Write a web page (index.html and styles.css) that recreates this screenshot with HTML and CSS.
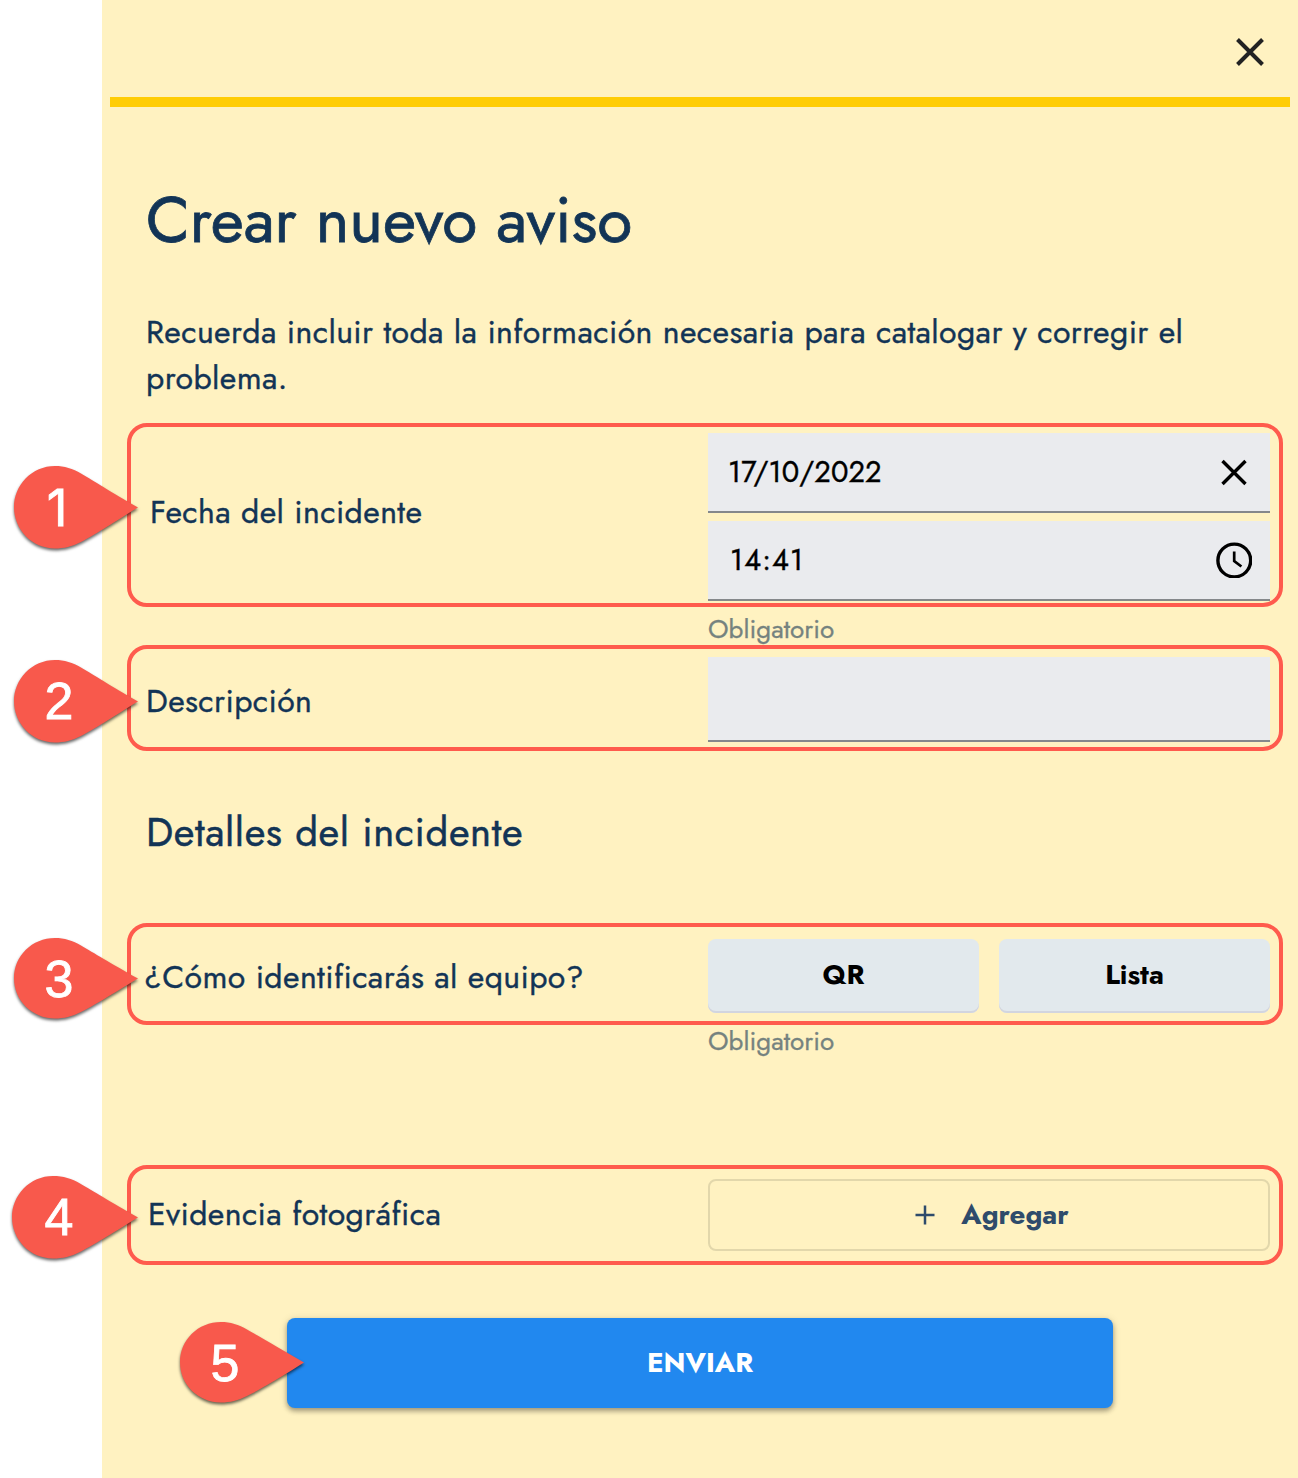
FILE: index.html
```html
<!DOCTYPE html>
<html lang="es">
<head>
<meta charset="utf-8">
<title>Crear nuevo aviso</title>
<link rel="stylesheet" href="styles.css">
</head>
<body>
<main class="panel">
  <header class="panel-header">
    <svg class="close" width="28" height="28" viewBox="0 0 28 28"><path d="M1.5 1.5l25 25M26.5 1.5l-25 25"/></svg>
  </header>
  <h1 class="title">Crear nuevo aviso</h1>
  <p class="intro">Recuerda incluir toda la información necesaria para catalogar y corregir el<br>problema.</p>

  <section class="row row-date">
    <span class="label label-date">Fecha del incidente</span>
    <div class="fields">
      <div class="field"><span>17/10/2022</span>
        <svg width="36" height="36" viewBox="0 0 36 36"><path d="M6.5 7l23 23M29.5 7l-23 23" stroke-width="3.4"/></svg>
      </div>
      <div class="field"><span class="value-time">14:41</span>
        <svg width="36" height="36" viewBox="0 0 36 36"><circle cx="18.300" cy="18.500" r="16.4" stroke-width="3.4"/><path d="M18.200 9.500v9.500l7.200 5.500" stroke-width="2.7"/></svg>
      </div>
    </div>
    <div class="marker"><svg width="132" height="96" viewBox="0 0 132 96"><path d="M126 41.500C98 25.500 82 15 69 7.500C61 2.500 52 0 43 0C20 0 2 19 2 41.300S20 82.500 43 82.500C52 82.500 60 80.500 69 76C82 69.500 98 58.500 126 41.500Z"/></svg><b class="one">1</b></div>
  </section>
  <p class="helper helper-date">Obligatorio</p>

  <section class="row row-desc">
    <span class="label label-desc">Descripción</span>
    <div class="field field-desc"></div>
    <div class="marker"><svg width="132" height="96" viewBox="0 0 132 96"><path d="M126 41.500C98 25.500 82 15 69 7.500C61 2.500 52 0 43 0C20 0 2 19 2 41.300S20 82.500 43 82.500C52 82.500 60 80.500 69 76C82 69.500 98 58.500 126 41.500Z"/></svg><b>2</b></div>
  </section>

  <h2 class="subtitle">Detalles del incidente</h2>

  <section class="row row-team">
    <span class="label label-team">¿Cómo identificarás al equipo?</span>
    <div class="choices"><button class="choice">QR</button><button class="choice">Lista</button></div>
    <div class="marker"><svg width="132" height="96" viewBox="0 0 132 96"><path d="M126 40.500C98 25 82 15 69 7.500C61 2.500 52 0 43 0C20 0 2 18 2 40.300S20 80.500 43 80.500C52 80.500 60 78.500 69 74C82 67.500 98 57.500 126 40.500Z"/></svg><b>3</b></div>
  </section>
  <p class="helper helper-team">Obligatorio</p>

  <section class="row row-photo">
    <span class="label label-photo">Evidencia fotográfica</span>
    <button class="add"><svg width="20" height="20" viewBox="0 0 20 20"><path d="M10 .5v19M.5 10h19"/></svg><span>Agregar</span></button>
    <div class="marker"><svg width="132" height="96" viewBox="0 0 132 96"><path d="M126 41.500C98 25.500 81 15 68 7.500C60 2.500 51 0 41 0C18 0 0 19 0 41.300S18 82.500 41 82.500C51 82.500 59 80.500 68 76C81 69.500 98 58.500 126 41.500Z"/></svg><b>4</b></div>
  </section>

  <div class="submit-wrap">
    <button class="submit">ENVIAR</button>
    <div class="marker marker-submit"><svg width="132" height="96" viewBox="0 0 132 96"><path d="M125 40.500C98 25 81 15 68 7.500C60 2.500 51 0 42 0C19 0 1 18 1 40.300S19 80.500 42 80.500C51 80.500 59 78.500 68 74C81 67.500 98 57.500 125 40.500Z"/></svg><b>5</b></div>
  </div>
</main>
</body>
</html>
```
FILE: styles.css
```css
* { box-sizing: border-box; }
body {
  margin: 0;
  padding-left: 102px;
  background: #fff;
  font-family: Jost, Lato, sans-serif;
  color: #123456;
}
.panel { height: 1478px; background: #fff2c1; }
h1, h2, p { margin: 0; font-weight: 400; }
button { font-family: inherit; border: 0; padding: 0; font-weight: 700; }
.panel-header {
  height: 107px;
  margin: 0 8px;
  padding: 38px 26px 0 0;
  border-bottom: 10px solid #ffcd05;
  display: flex;
  justify-content: flex-end;
}
.close { fill: none; stroke: #222; stroke-width: 4; }
.title {
  margin: 73px 0 0 44px;
  font-size: 64px;
  line-height: 80px;
  white-space: nowrap;
  -webkit-text-stroke: .8px;
}
.intro {
  margin: 49px 0 0 44px;
  font-size: 32px;
  line-height: 46px;
  height: 90px;
  white-space: nowrap;
  letter-spacing: .4px;
  -webkit-text-stroke: .35px;
}
.row {
  position: relative;
  margin: 0 15px 0 25px;
  border: 4px solid #ff5b4d;
  border-radius: 20px;
  display: grid;
  grid-template-columns: 1fr 562px;
  padding: 6px 9px 0 15px;
}
.label {
  font-size: 32px;
  line-height: 40px;
  white-space: nowrap;
  align-self: start;
  letter-spacing: .4px;
  -webkit-text-stroke: .35px;
}
.row-date { height: 184px; margin-top: 24px; }
.label-date { padding: 59px 0 0 4px; }
.fields { display: flex; flex-direction: column; gap: 8px; }
.field {
  height: 80px;
  background: #eaebee;
  border-bottom: 2px solid #85888b;
  display: flex;
  align-items: center;
  justify-content: space-between;
  padding: 0 18px 0 20px;
  color: #000;
  font-size: 29px;
  letter-spacing: .1px;
  -webkit-text-stroke: .35px;
}
.value-time { padding-left: 2px; letter-spacing: 1.100px; }
.field svg { fill: none; stroke: #000; }
.helper { font-size: 26px; line-height: 30px; padding-left: 606px; color: #75827f; -webkit-text-stroke: .3px; letter-spacing: .05px; }
.helper-date { height: 38px; padding-top: 7px; }
.helper-team { height: 140px; padding-top: 1px; }
.row-desc { height: 106px; padding-top: 8px; }
.label-desc { padding-top: 24px; }
.field-desc { height: 85px; }
.subtitle {
  margin: 56px 0 0 44px;
  font-size: 40px;
  line-height: 50px;
  letter-spacing: .6px;
  -webkit-text-stroke: .45px;
}
.row-team { height: 102px; margin-top: 66px; padding: 12px 9px 0 13px; }
.label-team { padding-top: 18px; }
.choices { display: flex; gap: 20px; }
.choice {
  flex: 1;
  height: 74px;
  border-radius: 8px;
  background: #e2e9ed;
  box-shadow: inset 0 -2px #d2d5df;
  font-size: 27.700px;
  color: #000;
  padding-bottom: 4px;
}
.row-photo { height: 100px; padding-top: 10px; }
.label-photo { padding: 15px 0 0 2px; }
.add {
  height: 72px;
  border: 2px solid #e2d7ab;
  border-radius: 8px;
  background: none;
  color: #2e4b6b;
  font-size: 27.700px;
  display: flex;
  align-items: center;
  justify-content: center;
  gap: 26px;
  padding-left: 6px;
}
.add span { padding-bottom: 2px; }
.add svg { fill: none; stroke: #2e4b6b; stroke-width: 2.500; }
.submit-wrap { position: relative; margin: 53px 185px 0; }
.submit {
  display: block;
  width: 100%;
  height: 90px;
  border-radius: 8px;
  background: #2188ef;
  color: #fff;
  font-size: 27.700px;
  padding-bottom: 3px;
  box-shadow: 0 3px 5px rgba(0, 0, 0, .32), 0 1px 8px rgba(0, 0, 0, .12);
}
/* Numbered callouts pointing at each row */
.marker { position: absolute; left: -119px; width: 132px; height: 96px; }
.marker svg { position: absolute; left: 0; top: 0; overflow: visible; fill: #f8594c; filter: drop-shadow(0 2px 1.500px rgba(0, 0, 0, .6)); }
.marker b {
  position: absolute;
  left: 27px;
  top: 12px;
  width: 40px;
  text-align: center;
  font: 400 52px/58px "Liberation Sans", sans-serif;
  color: #fff;
  -webkit-text-stroke: .8px #fff;
}
.marker b.one { font-family: Inter, sans-serif; font-size: 51px; left: 25px; top: 13px; }
.row-date .marker { top: 39px; }
.row-desc .marker { top: 11px; }
.row-team .marker { top: 11px; }
.row-photo .marker { top: 7px; }
.marker-submit { left: -108px; top: 4px; }
.marker-submit b { left: 26px; }
```
